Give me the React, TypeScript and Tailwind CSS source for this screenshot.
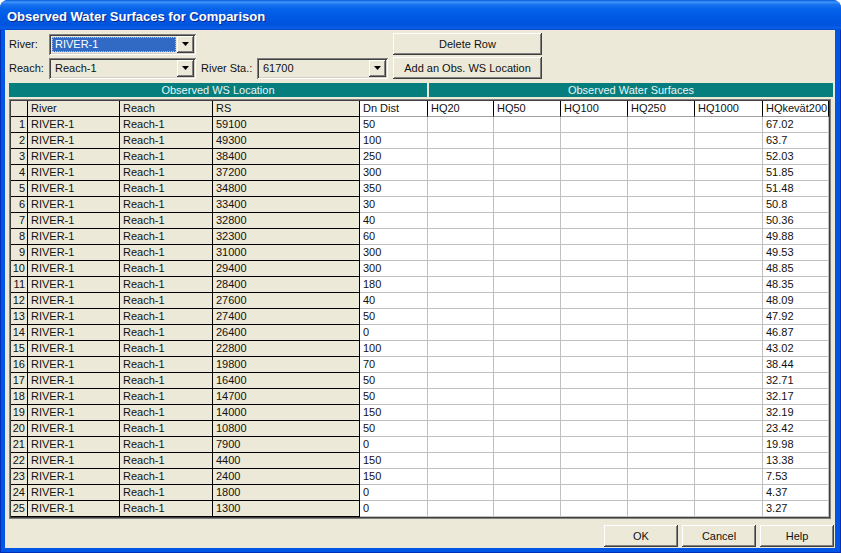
import React from 'react'

const rows: [string, string, string][] = [
    ['59100', '50', '67.02'],
    ['49300', '100', '63.7'],
    ['38400', '250', '52.03'],
    ['37200', '300', '51.85'],
    ['34800', '350', '51.48'],
    ['33400', '30', '50.8'],
    ['32800', '40', '50.36'],
    ['32300', '60', '49.88'],
    ['31000', '300', '49.53'],
    ['29400', '300', '48.85'],
    ['28400', '180', '48.35'],
    ['27600', '40', '48.09'],
    ['27400', '50', '47.92'],
    ['26400', '0', '46.87'],
    ['22800', '100', '43.02'],
    ['19800', '70', '38.44'],
    ['16400', '50', '32.71'],
    ['14700', '50', '32.17'],
    ['14000', '150', '32.19'],
    ['10800', '50', '23.42'],
    ['7900', '0', '19.98'],
    ['4400', '150', '13.38'],
    ['2400', '150', '7.53'],
    ['1800', '0', '4.37'],
    ['1300', '0', '3.27'],
]

const cols = [
    { title: '', w: 'w-[17px]' },
    { title: 'River', w: 'w-[92px]' },
    { title: 'Reach', w: 'w-[93px]' },
    { title: 'RS', w: 'w-[147px]' },
    { title: 'Dn Dist', w: 'w-[68px]' },
    { title: 'HQ20', w: 'w-[66px]' },
    { title: 'HQ50', w: 'w-[67px]' },
    { title: 'HQ100', w: 'w-[67px]' },
    { title: 'HQ250', w: 'w-[67px]' },
    { title: 'HQ1000', w: 'w-[68px]' },
    { title: 'HQkevät200', w: 'w-[66px]' },
]

const raised =
    'shadow-[inset_-1px_-1px_0_#404040,inset_1px_1px_0_#ffffff,inset_-2px_-2px_0_#808080,inset_2px_2px_0_#ece9d8]'
const sunken =
    'shadow-[inset_1px_1px_0_#808080,inset_-1px_-1px_0_#ffffff,inset_2px_2px_0_#404040,inset_-2px_-2px_0_#d4d0c8]'

function Arrow() {
    return (
        <svg width="7" height="4" viewBox="0 0 7 4">
            <polygon points="0,0 7,0 3.5,4" fill="#000" />
        </svg>
    )
}

function Combo({ w, text, selected }: { w: string; text: string; selected?: boolean }) {
    return (
        <div className={`flex h-[21px] ${w} p-[2px] bg-[#ece9d8] ${sunken}`}>
            <div className="flex-1 flex items-stretch pl-[1px] pr-[1px] py-[1px]">
                {selected ? (
                    <div className="flex-1 flex items-center pl-[2px] bg-[#316ac5] text-white border border-dotted border-[#aebfe6]">
                        {text}
                    </div>
                ) : (
                    <div className="flex-1 flex items-center pl-[3px]">{text}</div>
                )}
            </div>
            <div className={`w-[17px] flex items-center justify-center bg-[#ece9d8] ${raised}`}>
                <Arrow />
            </div>
        </div>
    )
}

function Button({ w, label }: { w: string; label: string }) {
    return (
        <div className={`${w} h-[22px] flex items-center justify-center bg-[#ece9d8] ${raised}`}>
            {label}
        </div>
    )
}

export default function App() {
    return (
        <div className="w-[841px] h-[553px] bg-white text-[11px] text-[#111] font-['Liberation_Sans',Arial,sans-serif] leading-none">
            <div className="w-full h-full flex flex-col rounded-t-[8px] overflow-hidden bg-[#0055e5]">
                {/* title bar */}
                <div className="h-[30px] flex items-center pl-[7px] pt-[3px] bg-[linear-gradient(180deg,#0a5bd8_0%,#3d95ff_7%,#1a74f0_15%,#0563ea_30%,#0058e3_60%,#0054de_85%,#0b60e8_94%,#0046c8_100%)]">
                    <span className="text-white font-bold text-[13px] [text-shadow:1px_1px_0_#0a2a8a]">
                        Observed Water Surfaces for Comparison
                    </span>
                </div>

                <div className="flex-1 flex pl-[4px] pr-[5px] pb-[4px] border-l border-r border-b border-[#0030b8]">
                    <div className="flex-1 flex flex-col bg-[#ece9d8] pt-[2px]">
                        {/* controls */}
                        <div className="flex items-center h-[22px] pl-[4px] mt-[1px]">
                            <div className="w-[40px]">River:</div>
                            <Combo w="w-[147px]" text="RIVER-1" selected />
                            <div className="ml-[197px]">
                                <Button w="w-[149px]" label="Delete Row" />
                            </div>
                        </div>
                        <div className="flex items-center h-[22px] mt-[2px] pl-[4px]">
                            <div className="w-[40px]">Reach:</div>
                            <Combo w="w-[147px]" text="Reach-1" />
                            <div className="w-[61px] pl-[5px]">River Sta.:</div>
                            <Combo w="w-[131px]" text="61700" />
                            <div className="ml-[5px]">
                                <Button w="w-[149px]" label="Add an Obs. WS Location" />
                            </div>
                        </div>

                        {/* group header */}
                        <div className="flex ml-[4px] mt-[4px] w-[824px] h-[14px] text-[#eaf4f4]">
                            <div className="w-[418px] bg-[#077e7e] flex items-center justify-center">Observed WS Location</div>
                            <div className="w-[2px]" />
                            <div className="flex-1 bg-[#077e7e] flex items-center justify-center">Observed Water Surfaces</div>
                        </div>

                        {/* grid */}
                        <div className="ml-[4px] mt-[2px] w-[822px] border border-[#808080]">
                            <div className="border border-[#404040] bg-white">
                                <div className="flex h-[16px]">
                                    {cols.map((c, i) => (
                                        <div
                                            key={i}
                                            className={`${c.w} flex items-center pl-[3px] border-r border-b border-r-black ${
                                                i < 4 ? 'bg-[#ece9d8] border-b-black' : 'bg-white border-b-[#a0a0a0]'
                                            }`}
                                        >
                                            {c.title}
                                        </div>
                                    ))}
                                </div>
                                {rows.map((r, ri) => {
                                    const vals = [
                                        String(ri + 1),
                                        'RIVER-1',
                                        'Reach-1',
                                        r[0],
                                        r[1],
                                        '',
                                        '',
                                        '',
                                        '',
                                        '',
                                        r[2],
                                    ]
                                    return (
                                        <div key={ri} className="flex h-[16px]">
                                            {vals.map((v, i) => (
                                                <div
                                                    key={i}
                                                    className={`${cols[i].w} flex items-center border-r border-b ${
                                                        i === 0
                                                            ? 'justify-end pr-[2px] bg-[#ece9d8] border-black'
                                                            : i < 4
                                                            ? 'pl-[3px] bg-[#ece9d8] border-black'
                                                            : 'pl-[3px] bg-white border-[#c0c0c0]'
                                                    }`}
                                                >
                                                    {v}
                                                </div>
                                            ))}
                                        </div>
                                    )
                                })}
                            </div>
                        </div>

                        {/* dialog buttons */}
                        <div className="flex justify-end gap-[4px] pr-[1px] mt-[6px]">
                            <Button w="w-[74px]" label="OK" />
                            <Button w="w-[74px]" label="Cancel" />
                            <Button w="w-[74px]" label="Help" />
                        </div>
                    </div>
                </div>
            </div>
        </div>
    )
}
